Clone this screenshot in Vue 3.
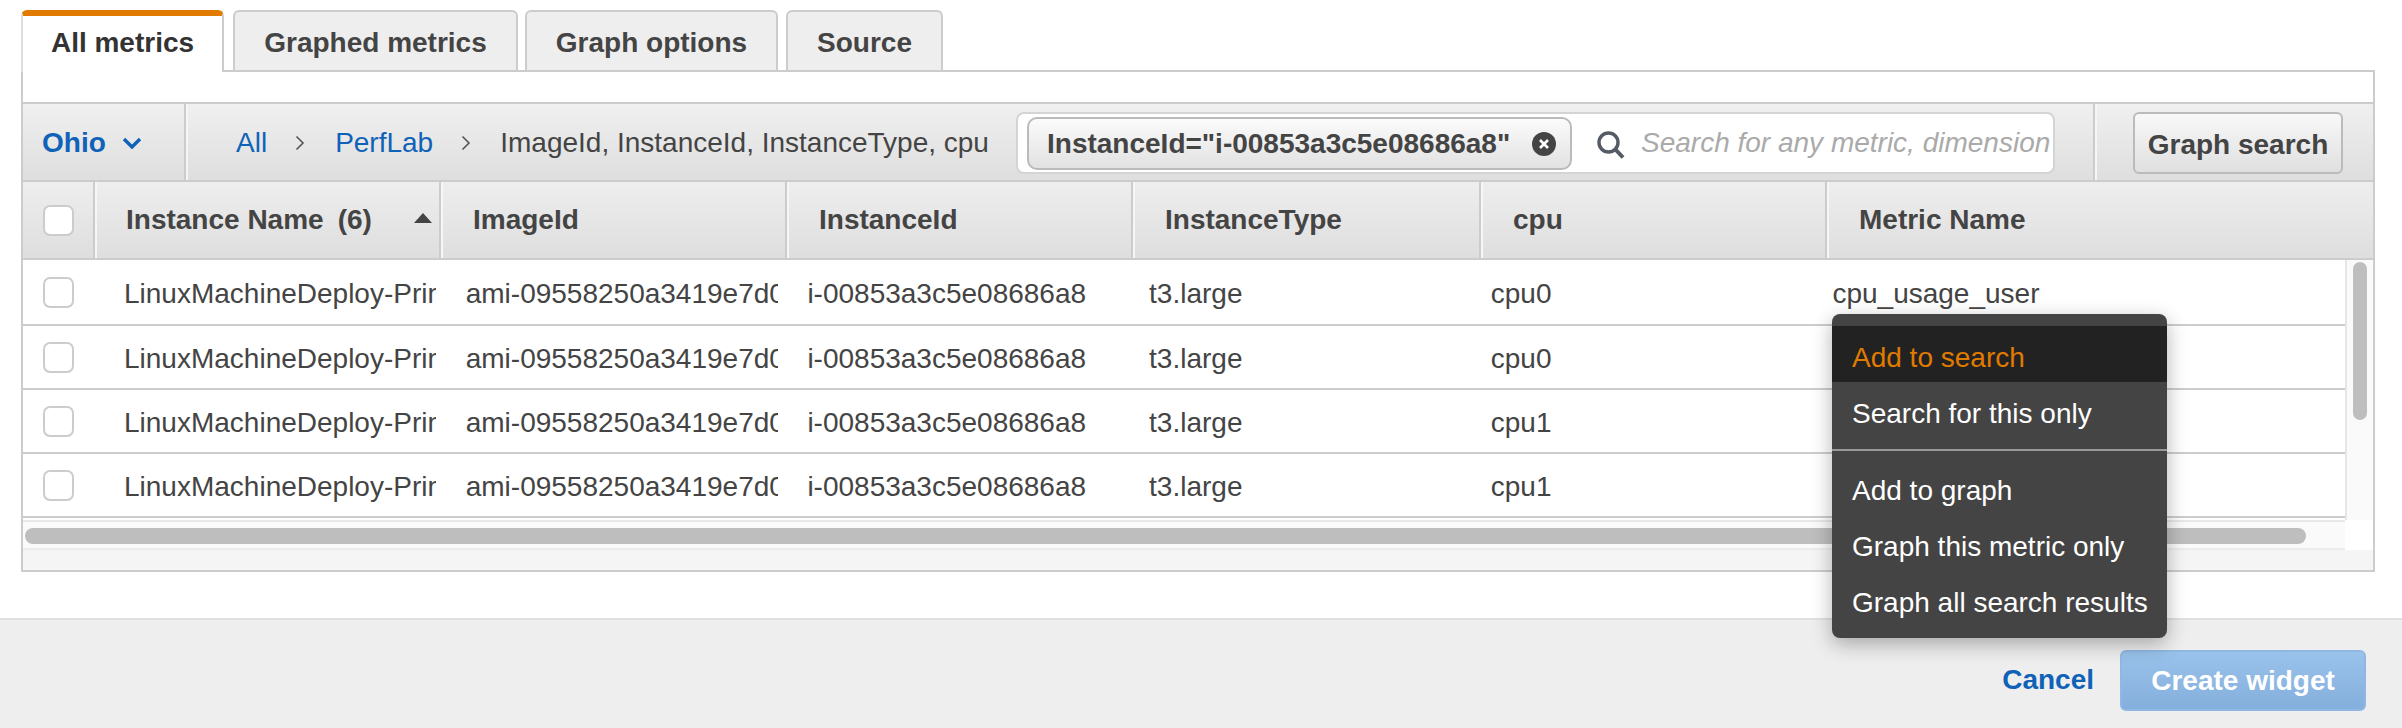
<script setup>
const tabs = ['All metrics', 'Graphed metrics', 'Graph options', 'Source']

const columns = [
  { label: 'ImageId', width: 346 },
  { label: 'InstanceId', width: 346 },
  { label: 'InstanceType', width: 348 },
  { label: 'cpu', width: 346 },
  { label: 'Metric Name', width: 347 }
]

const rows = [
  { cpu: 'cpu0', metric: 'cpu_usage_user' },
  { cpu: 'cpu0', metric: '' },
  { cpu: 'cpu1', metric: '' },
  { cpu: 'cpu1', metric: '' }
]

const menuGroups = [
  ['Add to search', 'Search for this only'],
  ['Add to graph', 'Graph this metric only', 'Graph all search results']
]
</script>

<template>
  <div class="page">
    <div class="content">
      <div class="tabs">
        <div
          v-for="(tab, i) in tabs"
          :key="tab"
          class="tab"
          :class="['tab-' + i, { active: i === 0 }]"
        >
          {{ tab }}
        </div>
      </div>

      <div class="panel">
        <div class="toolbar">
          <div class="region">
            <span>Ohio</span>
            <svg width="20" height="12" viewBox="0 0 20 12">
              <path d="M2 2l8 8 8-8" fill="none" stroke="#0f62b8" stroke-width="3.4" />
            </svg>
          </div>
          <div class="crumbs">
            <a>All</a>
            <svg class="crumb-arrow" width="10" height="16" viewBox="0 0 10 16">
              <path d="M1.5 1.5l6.5 6.5-6.5 6.5" fill="none" stroke="#555" stroke-width="1.6" />
            </svg>
            <a>PerfLab</a>
            <svg class="crumb-arrow" width="10" height="16" viewBox="0 0 10 16">
              <path d="M1.5 1.5l6.5 6.5-6.5 6.5" fill="none" stroke="#555" stroke-width="1.6" />
            </svg>
            <span class="crumb-text">ImageId, InstanceId, InstanceType, cpu</span>
          </div>
          <div class="search">
            <div class="token">
              <span>InstanceId="i-00853a3c5e08686a8"</span>
              <svg width="26" height="26" viewBox="0 0 26 26">
                <circle cx="13" cy="13" r="12" fill="#444" />
                <path d="M9 9l8 8M17 9l-8 8" stroke="#fff" stroke-width="2.6" />
              </svg>
            </div>
            <svg class="search-icon" width="30" height="30" viewBox="0 0 30 30">
              <circle cx="12.5" cy="12.5" r="9.5" fill="none" stroke="#545b64" stroke-width="3.4" />
              <path d="M19.5 19.5L27 27.5" stroke="#545b64" stroke-width="4" />
            </svg>
            <span class="placeholder">Search for any metric, dimension</span>
          </div>
          <div class="search-action">
            <button class="graph-search">Graph search</button>
          </div>
        </div>

        <div class="thead">
          <div class="th th-check"><span class="check"></span></div>
          <div class="th th-name">
            <span>Instance Name</span>
            <span class="count">(6)</span>
            <svg class="sort" width="18" height="10" viewBox="0 0 18 10">
              <path d="M9 0l9 10H0z" fill="#444" />
            </svg>
          </div>
          <div
            v-for="col in columns"
            :key="col.label"
            class="th"
            :style="{ width: col.width + 'px' }"
          >
            {{ col.label }}
          </div>
        </div>

        <div class="tbody">
          <div class="rows">
            <div v-for="(row, i) in rows" :key="i" class="row">
              <div class="cell-check"><span class="check"></span></div>
              <div class="cell">LinuxMachineDeploy-PrimaryInstance</div>
              <div class="cell">ami-09558250a3419e7d0</div>
              <div class="cell">i-00853a3c5e08686a8</div>
              <div class="cell">t3.large</div>
              <div class="cell">{{ row.cpu }}</div>
              <div class="cell">{{ row.metric }}</div>
            </div>
          </div>
          <div class="vscroll"><div class="vthumb"></div></div>
        </div>

        <div class="hscroll">
          <div class="htrack"><div class="hthumb"></div></div>
          <div class="corner"></div>
        </div>
        <div class="panel-end"></div>
      </div>
    </div>

    <div class="footer">
      <a class="cancel">Cancel</a>
      <button class="create">Create widget</button>
    </div>

    <ul class="menu">
      <template v-for="(group, g) in menuGroups" :key="g">
        <li v-if="g > 0" class="menu-line"></li>
        <li
          v-for="item in group"
          :key="item"
          class="menu-item"
          :class="{ hot: item === 'Add to search', low: g === 0 }"
        >
          {{ item }}
        </li>
      </template>
    </ul>
  </div>
</template>

<style scoped>
.page {
  position: relative;
  width: 2402px;
  height: 728px;
  overflow: hidden;
  display: flex;
  flex-direction: column;
  background: #fff;
  color: #444;
  font-family: "Liberation Sans", Arial, sans-serif;
  font-size: 28px;
}
.content {
  flex: 1;
  padding: 10px 27px 0 21px;
}
.tabs {
  display: flex;
  height: 62px;
}
.tab {
  box-sizing: border-box;
  height: 60px;
  margin-right: 8px;
  border: 2px solid #ccc;
  border-bottom: 0;
  border-radius: 6px 6px 0 0;
  background: #eee;
  font-weight: 700;
  text-align: center;
  line-height: 62px;
  color: #444;
}
.tab-0 { width: 203px; margin-right: 9px; }
.tab-1 { width: 285px; margin-right: 7px; }
.tab-2 { width: 253px; }
.tab-3 { width: 157px; margin-right: 0; }
.tab.active {
  height: 62px;
  position: relative;
  z-index: 1;
  background: #fff;
  border-top: 6px solid #e07b00;
  border-left: 2px solid #ddd;
  border-right: 2px solid #ccc;
  line-height: 54px;
  color: #333;
}
.panel {
  margin-top: -2px;
  height: 502px;
  box-sizing: border-box;
  border: 2px solid #ccc;
  padding-top: 30px;
  background: #fff;
}
.toolbar {
  display: flex;
  height: 80px;
  box-sizing: border-box;
  border-top: 2px solid #ccc;
  border-bottom: 2px solid #ccc;
  background: linear-gradient(#f0f0f0, #dedede);
}
.region {
  box-sizing: border-box;
  width: 163px;
  display: flex;
  align-items: center;
  gap: 16px;
  padding: 2px 0 0 19px;
  font-weight: 700;
  color: #0f62b8;
  border-right: 2px solid #ccc;
  box-shadow: 2px 0 0 #f6f6f6;
}
.crumbs {
  box-sizing: border-box;
  width: 830px;
  display: flex;
  align-items: center;
  padding: 2px 0 0 50px;
}
.crumbs a {
  color: #0f62b8;
}
.crumb-arrow {
  margin: 0 30px 0 28px;
}
.crumb-text {
  margin-left: -1px;
  white-space: nowrap;
}
.search {
  box-sizing: border-box;
  width: 1039px;
  height: 62px;
  margin-top: 8px;
  display: flex;
  align-items: center;
  padding-left: 9px;
  background: #fff;
  border: 2px solid #d4d4d4;
  border-radius: 8px;
  overflow: hidden;
}
.token {
  box-sizing: border-box;
  flex: none;
  width: 545px;
  height: 53px;
  display: flex;
  align-items: center;
  gap: 21px;
  padding: 1px 0 0 18px;
  border: 2px solid #bbb;
  border-radius: 10px;
  background: linear-gradient(#fbfbfb, #e2e2e2);
  font-weight: 700;
  white-space: nowrap;
}
.search-icon {
  flex: none;
  margin: 4px 15px 0 24px;
}
.placeholder {
  font-style: italic;
  color: #aaa;
  white-space: nowrap;
}
.search-action {
  flex: 1;
  margin-left: 38px;
  padding-left: 38px;
  border-left: 2px solid #ccc;
  box-shadow: inset 2px 0 0 #f6f6f6;
}
.graph-search {
  display: block;
  box-sizing: border-box;
  width: 210px;
  height: 62px;
  margin-top: 8px;
  padding: 3px 0 0;
  border: 2px solid #bbb;
  border-radius: 6px;
  background: linear-gradient(#f8f8f8, #e0e0e0);
  font: 700 28px "Liberation Sans", Arial, sans-serif;
  color: #444;
}
.thead {
  display: flex;
  height: 78px;
  box-sizing: border-box;
  border-bottom: 2px solid #ccc;
  background: linear-gradient(#eee, #dedede);
}
.th {
  box-sizing: border-box;
  display: flex;
  align-items: center;
  padding-left: 32px;
  font-weight: 700;
  white-space: nowrap;
  border-right: 2px solid #ccc;
  box-shadow: 2px 0 0 #f6f6f6;
}
.th:last-child {
  border-right: 0;
  box-shadow: none;
}
.th-check {
  width: 72px;
  padding-left: 20px;
}
.th-name {
  width: 346px;
  padding-left: 31px;
}
.count {
  margin-left: 14px;
}
.sort {
  margin-left: 42px;
  margin-top: -4px;
}
.check {
  display: block;
  box-sizing: border-box;
  width: 31px;
  height: 31px;
  border: 2px solid #ccc;
  border-radius: 7px;
  background: #fff;
}
.tbody {
  display: flex;
  height: 260px;
}
.rows {
  width: 2322px;
  overflow: hidden;
}
.row {
  box-sizing: border-box;
  height: 64px;
  display: flex;
  align-items: center;
  border-bottom: 2px solid #ccc;
}
.row:first-child {
  height: 66px;
}
.cell-check {
  flex: none;
  width: 101px;
  padding-left: 20px;
  box-sizing: border-box;
}
.cell {
  flex: none;
  width: 312px;
  margin-right: 29.7px;
  padding-top: 3px;
  white-space: nowrap;
  overflow: hidden;
}
.vscroll {
  flex: 1;
  box-sizing: border-box;
  padding: 2px 6px 0 6px;
  border-left: 2px solid #e6e6e6;
  background: #fafafa;
}
.vthumb {
  height: 158px;
  border-radius: 8px;
  background: #bebebe;
}
.hscroll {
  display: flex;
  height: 30px;
}
.htrack {
  box-sizing: border-box;
  width: 2322px;
  padding: 6px 2px;
  background: #fafafa;
  border-top: 2px solid #e8e8e8;
  border-bottom: 2px solid #ececec;
}
.hthumb {
  width: 2281px;
  height: 16px;
  border-radius: 8px;
  background: #bebebe;
}
.corner {
  flex: 1;
  background: #fff;
}
.panel-end {
  height: 20px;
  background: #f5f5f5;
}
.footer {
  box-sizing: border-box;
  height: 110px;
  display: flex;
  align-items: flex-start;
  justify-content: flex-end;
  gap: 26px;
  padding: 30px 36px 0 0;
  border-top: 2px solid #e0e0e0;
  background: #eee;
}
.cancel {
  line-height: 60px;
  font-weight: 700;
  color: #0f62b8;
}
.create {
  box-sizing: border-box;
  width: 246px;
  height: 61px;
  padding: 0;
  border: 2px solid #8fb9e4;
  border-radius: 6px;
  background: linear-gradient(#99c2eb, #85afdc);
  font: 700 28px "Liberation Sans", Arial, sans-serif;
  color: #fff;
}
.menu {
  position: absolute;
  left: 1832px;
  top: 314px;
  box-sizing: border-box;
  width: 335px;
  height: 324px;
  margin: 0;
  padding: 12px 0 0;
  list-style: none;
  border-radius: 8px;
  background: #444;
  color: #fff;
  box-shadow: 0 6px 20px rgba(0, 0, 0, 0.3);
}
.menu-item {
  height: 56px;
  line-height: 56px;
  padding-left: 20px;
  white-space: nowrap;
}
.menu-item.low {
  line-height: 64px;
}
.menu-item.hot {
  background: #222;
  color: #e07b00;
}
.menu-line {
  height: 2px;
  margin: 11px 0 12px;
  background: #999;
}
</style>
